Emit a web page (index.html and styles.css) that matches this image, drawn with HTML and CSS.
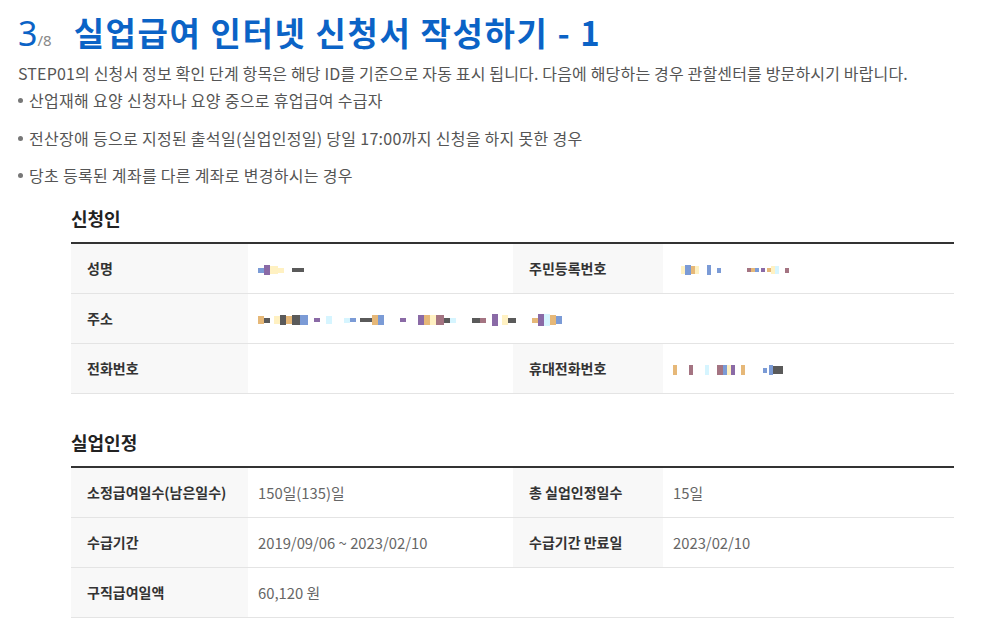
FILE: index.html
```html
<!DOCTYPE html>
<html>
<head>
  <meta charset="utf-8">
  <title>실업급여 인터넷 신청서 작성하기 - 1</title>
  <link rel="stylesheet" href="styles.css">
</head>
<body>
  <div class="page">
    <h1 class="page-title">
      <span class="step-num">3</span><span class="step-total">/8</span>
      <span class="title-text">실업급여 인터넷 신청서 작성하기 - 1</span>
    </h1>

    <p class="intro">STEP01의 신청서 정보 확인 단계 항목은 해당 ID를 기준으로 자동 표시 됩니다. 다음에 해당하는 경우 관할센터를 방문하시기 바랍니다.</p>
    <ul class="notice-list">
      <li>산업재해 요양 신청자나 요양 중으로 휴업급여 수급자</li>
      <li>전산장애 등으로 지정된 출석일(실업인정일) 당일 17:00까지 신청을 하지 못한 경우</li>
      <li>당초 등록된 계좌를 다른 계좌로 변경하시는 경우</li>
    </ul>

    <div class="section">
      <h2 class="section-title">신청인</h2>
      <table class="info-table">
        <tr>
          <th>성명</th>
          <td>
            <span class="mosaic">
              <i class="c-blue w3 h4"></i><i class="c-purple w3 h8"></i><i class="c-pale w4 h6"></i><i class="c-pale w3 h4"></i><i class="gap4"></i><i class="c-dark w6 h3"></i>
            </span>
          </td>
          <th>주민등록번호</th>
          <td>
            <span class="mosaic small">
              <i class="gap4"></i><i class="c-pale w3 h6"></i><i class="c-blue w4 h8"></i><i class="c-tan w3 h6"></i><i class="c-pale w3 h6"></i><i class="gap4"></i><i class="c-blue w3 h8"></i><i class="gap3"></i><i class="c-blue w3 h4"></i>
              <i class="gap20"></i>
              <i class="c-mauve w3 h3"></i><i class="c-tan w3 h3"></i><i class="c-blue w3 h3"></i><i class="gap2"></i><i class="c-purple w3 h3"></i><i class="gap2"></i><i class="c-tan w3 h3"></i><i class="c-pale w3 h6"></i><i class="c-cyan w3 h6"></i><i class="gap3"></i><i class="c-mauve w3 h4"></i>
            </span>
          </td>
        </tr>
        <tr>
          <th>주소</th>
          <td colspan="3">
            <span class="mosaic">
              <i class="c-tan w3 h6"></i><i class="c-dark w3 h4"></i><i class="gap2"></i><i class="c-pale w3 h6"></i><i class="c-dark w3 h8"></i><i class="c-tan w3 h6"></i><i class="c-dark w4 h8"></i><i class="c-blue w4 h8"></i><i class="gap3"></i><i class="c-purple w3 h3"></i><i class="gap3"></i><i class="c-cyan w3 h6"></i><i class="gap6"></i><i class="c-cyan w3 h4"></i><i class="c-blue w3 h3"></i><i class="gap2"></i><i class="c-dark w6 h3"></i><i class="c-tan w3 h8"></i><i class="c-blue w3 h8"></i><i class="gap8"></i><i class="c-purple w3 h3"></i><i class="gap6"></i><i class="c-purple w3 h8"></i><i class="c-tan w3 h8"></i><i class="c-pale w3 h8"></i><i class="c-mauve w4 h8"></i><i class="c-dark w3 h4"></i><i class="c-cyan w3 h4"></i><i class="gap8"></i><i class="c-dark w4 h4"></i><i class="c-mauve w3 h4"></i><i class="gap3"></i><i class="c-purple w3 h10"></i><i class="gap2"></i><i class="c-pale w3 h8"></i><i class="c-dark w4 h4"></i><i class="gap8"></i><i class="c-tan w3 h4"></i><i class="c-purple w3 h10"></i><i class="c-cyan w3 h10"></i><i class="c-tan w3 h8"></i><i class="c-blue w3 h6"></i>
            </span>
          </td>
        </tr>
        <tr>
          <th>전화번호</th>
          <td></td>
          <th>휴대전화번호</th>
          <td>
            <span class="mosaic small">
              <i class="c-tan w3 h8"></i><i class="gap6"></i><i class="c-mauve w3 h8"></i><i class="gap6"></i><i class="c-cyan w3 h8"></i><i class="gap4"></i><i class="c-mauve w4 h8"></i><i class="c-blue w3 h8"></i><i class="c-pale w3 h8"></i><i class="c-purple w3 h8"></i><i class="gap3"></i><i class="c-tan w3 h8"></i><i class="gap14"></i><i class="c-blue w3 h4"></i><i class="gap2"></i><i class="c-blue w3 h8"></i><i class="c-dark w6 h6"></i>
            </span>
          </td>
        </tr>
      </table>
    </div>

    <div class="section">
      <h2 class="section-title">실업인정</h2>
      <table class="info-table">
        <tr>
          <th>소정급여일수(남은일수)</th>
          <td>150일(135)일</td>
          <th>총 실업인정일수</th>
          <td>15일</td>
        </tr>
        <tr>
          <th>수급기간</th>
          <td>2019/09/06 ~ 2023/02/10</td>
          <th>수급기간 만료일</th>
          <td>2023/02/10</td>
        </tr>
        <tr>
          <th>구직급여일액</th>
          <td colspan="3">60,120 원</td>
        </tr>
      </table>
    </div>
  </div>
</body>
</html>
```

FILE: styles.css
```css
body {
  margin: 0;
  padding: 0;
  background: #fff;
  font-family: "Noto Sans CJK KR", "Noto Sans", sans-serif;
  color: #555;
}

.page {
  padding: 8px 46px 0 18px;
}

.page-title {
  display: flex;
  align-items: baseline;
  margin: 0;
  height: 50px;
  font-weight: normal;
  color: #0b63c6;
}

.step-num {
  font-size: 34px;
  font-family: "Noto Sans", sans-serif;
}

.step-total {
  font-size: 15px;
  color: #888;
  font-family: "Noto Sans", sans-serif;
}

.title-text {
  margin-left: 22px;
  font-size: 33px;
  font-weight: bold;
  letter-spacing: 1.6px;
}

.intro {
  margin: 2px 0 0;
  font-size: 16px;
  line-height: 26px;
  letter-spacing: 0.16px;
  color: #555;
}

.notice-list {
  list-style: none;
  margin: 0;
  padding: 0;
  font-size: 16px;
  letter-spacing: 0.3px;
}

.notice-list li {
  height: 37.5px;
  line-height: 28px;
}

.notice-list li::before {
  content: "";
  display: inline-block;
  width: 5px;
  height: 5px;
  margin: 0 6px 0 0;
  border-radius: 50%;
  background: #777;
  vertical-align: middle;
  position: relative;
  top: -2px;
}

.section {
  margin-left: 53px;
}

.section + .section {
  margin-top: 29px;
}

.section-title {
  margin: 0;
  padding-top: 7px;
  height: 36px;
  font-size: 18px;
  font-weight: bold;
  color: #222;
  line-height: 24px;
}

.info-table {
  width: 100%;
  border-collapse: separate;
  border-spacing: 0;
  border-top: 2px solid #333;
  font-size: 14px;
  table-layout: fixed;
}

.info-table th,
.info-table td {
  height: 49px;
  border-bottom: 1px solid #e4e4e4;
}

.info-table th {
  width: 161px;
  padding: 0 0 0 16px;
  background: #f8f8f8;
  text-align: left;
  font-weight: bold;
  color: #333;
}

.info-table th:nth-child(3) {
  width: 134px;
}

.info-table td {
  padding: 0 10px;
  font-size: 14.8px;
  color: #666;
}

.info-table td:nth-child(2) {
  width: 245px;
}

/* blurred personal data */
.mosaic {
  display: inline-flex;
  align-items: center;
  height: 14px;
  vertical-align: middle;
}

.mosaic i {
  display: block;
}

.c-blue { background: #7b9bd6; }
.c-tan { background: #e6b878; }
.c-dark { background: #5a5a5a; }
.c-purple { background: #8a6aa6; }
.c-mauve { background: #a47482; }
.c-pale { background: #fff1c2; }
.c-cyan { background: #d6f5ff; }

.w3 { width: 6px; }
.w4 { width: 8px; }
.w6 { width: 12px; }
.h3 { height: 4px; }
.h4 { height: 5px; }
.h6 { height: 8px; }
.h8 { height: 10px; }
.h10 { height: 12px; }

.gap2 { width: 4px; }
.gap3 { width: 6px; }
.gap4 { width: 8px; }
.gap6 { width: 12px; }
.gap8 { width: 16px; }
.gap14 { width: 28px; }
.gap20 { width: 40px; }

.small .w3 { width: 4px; }
.small .w4 { width: 6px; }
.small .w6 { width: 10px; }
.small .gap20 { width: 26px; }
.small .gap14 { width: 18px; }
.small .gap2 { width: 2px; }
```
